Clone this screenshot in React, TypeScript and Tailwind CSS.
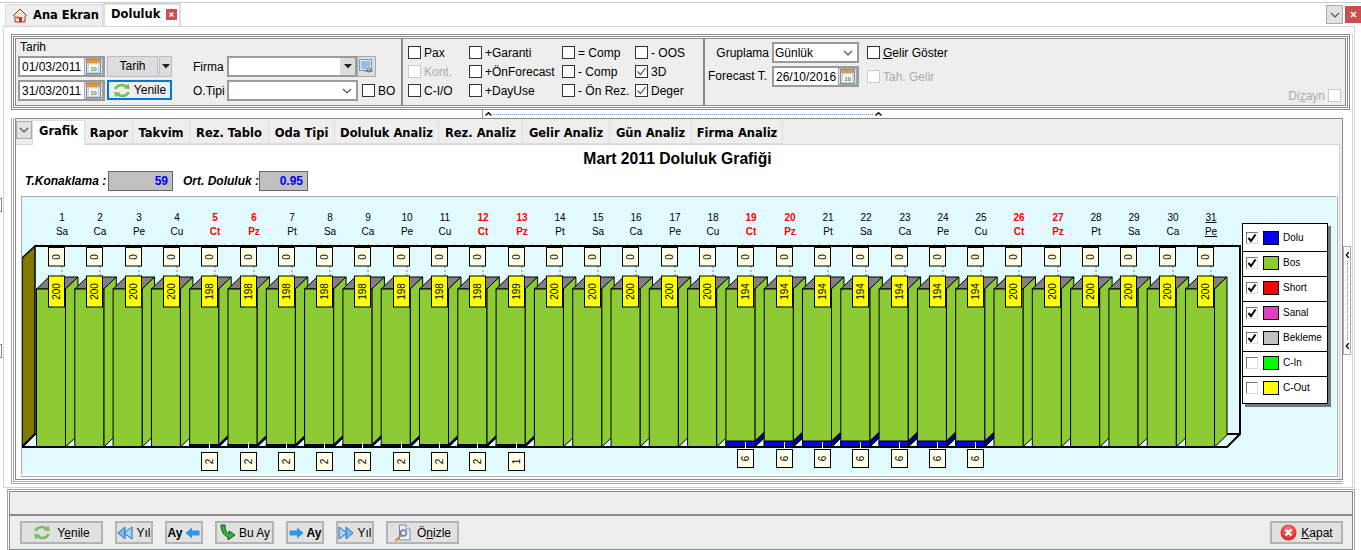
import React from "react";

const SANS = "font-['Liberation_Sans',Arial,sans-serif]";
const BOLD = "font-['DejaVu_Sans',sans-serif] font-bold text-[11.5px]";

const days = ["Sa","Ca","Pe","Cu","Ct","Pz","Pt"];
const centers = [62,100,139,177,215,254,292,330,368,407,445,483,522,560,598,636,675,713,751,790,828,866,905,943,981,1019,1058,1096,1134,1173,1211];
const data = centers.map((cx, i) => {
  const d = i + 1;
  const dolu = d >= 19 && d <= 25 ? 6 : d >= 5 && d <= 12 ? 2 : d === 13 ? 1 : 0;
  return { d, cx, name: days[i % 7], dolu, val: 200 - dolu, red: i % 7 === 4 || i % 7 === 5, left: 36.5 + 38.3 * i };
});

function Cal() {
  return (
    <svg width="15" height="15" viewBox="0 0 15 15">
      <rect x="0.5" y="0.5" width="14" height="14" fill="#cfe0ee" stroke="#7f93a8" />
      <rect x="1" y="1" width="13" height="3" fill="#e8953c" />
      <rect x="2.5" y="5" width="10" height="8" fill="#fff" stroke="#a8bccd" strokeWidth="0.5" />
      <text x="7.5" y="12" textAnchor="middle" fontSize="6" fontWeight="700" fill="#4e8a3a" fontFamily="Liberation Sans">10</text>
    </svg>
  );
}

function DateBox({ v, w = 87 }: { v: string; w?: number }) {
  return (
    <div className="flex h-[21px] items-center justify-between border-2 border-[#9a9a9a] bg-white pl-[2px]" style={{ width: w }}>
      <span className="text-[12px] leading-none text-black">{v}</span>
      <span className="flex h-[17px] w-[19px] items-center justify-center border border-[#aaa] bg-[#e1e1e1]"><Cal /></span>
    </div>
  );
}

function Check({ on, off, label, mr = 3 }: { on?: boolean; off?: boolean; label?: React.ReactNode; mr?: number }) {
  return (
    <div className="flex items-center">
      <span className={`flex h-[13px] w-[13px] items-center justify-center border bg-white ${off ? "border-[#ccc]" : "border-[#333]"}`}>
        {on && (
          <svg width="11" height="11" viewBox="0 0 11 11"><path d="M1.5 5.5 L4.5 8.5 L9.5 2" fill="none" stroke="#555" strokeWidth="1.2" /></svg>
        )}
      </span>
      {label && <span className={`text-[12px] leading-none ${off ? "text-[#aaa]" : "text-black"}`} style={{ marginLeft: mr }}>{label}</span>}
    </div>
  );
}

function Caret({ cls = "" }: { cls?: string }) {
  return <svg className={cls} width="8" height="5" viewBox="0 0 8 5"><path d="M0 0 H8 L4 4.5 Z" fill="#222" /></svg>;
}

function Chev() {
  return <svg width="10" height="6" viewBox="0 0 10 6"><path d="M1 1 L5 5 L9 1" fill="none" stroke="#555" strokeWidth="1.2" /></svg>;
}

function Hat({ cls = "" }: { cls?: string }) {
  return <svg className={cls} width="7" height="4" viewBox="0 0 7 4"><path d="M0.5 3.5 L3.5 0.7 L6.5 3.5" fill="none" stroke="#000" strokeWidth="1.3" /></svg>;
}

function Refresh() {
  return (
    <svg width="18" height="15" viewBox="0 0 18 15">
      <path d="M2.5 6 C3.5 2 10 0.5 13.5 4" fill="none" stroke="#7dbb5f" strokeWidth="2.6" />
      <path d="M10.5 5.5 L17 6 L15.5 0.5 Z" fill="#7dbb5f" />
      <path d="M15.5 9 C14.5 13 8 14.5 4.5 11" fill="none" stroke="#7dbb5f" strokeWidth="2.6" />
      <path d="M7.5 9.5 L1 9 L2.5 14.5 Z" fill="#7dbb5f" />
    </svg>
  );
}

function Btn({ w, children, cls = "" }: { w: number; children: React.ReactNode; cls?: string }) {
  return (
    <div className={`flex h-[23px] items-center justify-center gap-[3px] border-2 border-[#b4b4b4] bg-[#e1e1e1] text-[12px] text-black ${cls}`} style={{ width: w }}>
      {children}
    </div>
  );
}

function DoubleArrow({ right }: { right?: boolean }) {
  return (
    <svg width="16" height="14" viewBox="0 0 16 14" style={right ? { transform: "scaleX(-1)" } : undefined}>
      <path d="M1 7 L8 1 V13 Z" fill="#7cbcf0" stroke="#1c6fc2" />
      <path d="M7 7 L15 1 V13 Z" fill="#a8d4f6" stroke="#1c6fc2" />
    </svg>
  );
}

function Arrow({ right }: { right?: boolean }) {
  return (
    <svg width="15" height="12" viewBox="0 0 15 12" style={right ? { transform: "scaleX(-1)" } : undefined}>
      <path d="M0.5 6 L7 0.5 V3.5 H14.5 V8.5 H7 V11.5 Z" fill="#2f95e8" />
    </svg>
  );
}

function Chart() {
  const ticks: number[] = [];
  for (let x = 42; x < 1235; x += 9.6) ticks.push(x);
  return (
    <svg width="1314" height="277" viewBox="22 197 1314 277" className="block">
      {ticks.map((x, i) => (
        <line key={i} x1={x} x2={x} y1="243.5" y2="246" stroke="#bbb" strokeWidth="1" />
      ))}
      <path d="M22 258 L35 246 V434 L22 447 Z" fill="#807800" stroke="#000" strokeWidth="1.5" />
      <path d="M35 246 H1240 V434 L1227 447 H22 L35 434 H1240" fill="none" stroke="#000" strokeWidth="2" />
      {data.map((b) => {
        const l = b.left, r = l + 29, bot = 447, top = 289, dx = 12.5, dy = 12;
        const h = b.dolu === 6 ? 6 : b.dolu ? 2.5 : 0;
        return (
          <g key={b.d} stroke="#000" strokeWidth="1">
            <path d={`M${l} ${top} L${l + dx} ${top - dy} H${r + dx} L${r} ${top} Z`} fill="#808080" />
            <path d={`M${r} ${top} L${r + dx} ${top - dy} V${bot - dy} L${r} ${bot} Z`} fill="#8ccb33" />
            {h > 0 && <path d={`M${r} ${bot} V${bot - h} L${r + dx} ${bot - h - dy} V${bot - dy} Z`} fill="#000080" />}
            <rect x={l} y={top} width="29" height={bot - top} fill="#8ccb33" />
            {h > 0 && <rect x={l} y={bot - h} width="29" height={h} fill={b.dolu === 6 ? "#0000ff" : "#000070"} />}
          </g>
        );
      })}
      <line x1="22" x2="1227" y1="447" y2="447" stroke="#000" strokeWidth="2" />
      {data.map((b) => {
        const c = b.cx - 5.5;
        return (
          <g key={b.d} fontFamily="Liberation Sans" fontSize="10" fill="#000">
            <text x={b.cx} y="221" textAnchor="middle" fill={b.red ? "#ff0000" : "#000"} fontWeight={b.red ? 700 : 400} textDecoration={b.d === 31 ? "underline" : undefined}>{b.d}</text>
            <text x={b.cx} y="235" textAnchor="middle" fill={b.red ? "#ff0000" : "#000"} fontWeight={b.red ? 700 : 400} textDecoration={b.d === 31 ? "underline" : undefined}>{b.name}</text>
            <line x1={c} x2={c} y1="266" y2="276" stroke="#fff" />
            <line x1={b.cx} x2={b.cx} y1="266" y2="276" stroke="#888" strokeDasharray="2 2" />
            <rect x={c - 8} y="247.5" width="16" height="18.5" fill="#ffffe8" stroke="#000" />
            <text transform={`translate(${c + 3.5} 257) rotate(-90)`} textAnchor="middle">0</text>
            <rect x={c - 8} y="276" width="16" height="31" fill="#ffff00" stroke="#000" />
            <text transform={`translate(${c + 3.5} 291.5) rotate(-90)`} textAnchor="middle">{b.val}</text>
            {b.dolu > 0 && (() => {
              const y = b.dolu === 6 ? 449.5 : 452.5;
              return (
                <g>
                  <line x1={c} x2={c} y1="442" y2={y} stroke="#fff" />
                  <rect x={c - 8} y={y} width="16" height="18" fill="#ffffe8" stroke="#000" />
                  <text transform={`translate(${c + 3.5} ${y + 9}) rotate(-90)`} textAnchor="middle">{b.dolu}</text>
                </g>
              );
            })()}
          </g>
        );
      })}
    </svg>
  );
}

const legend: [string, string, boolean][] = [
  ["Dolu", "#0000ff", true],
  ["Bos", "#8ccb33", true],
  ["Short", "#ff0000", true],
  ["Sanal", "#e040c0", true],
  ["Bekleme", "#c0c0c0", true],
  ["C-In", "#00ff00", false],
  ["C-Out", "#ffff00", false],
];

function Legend() {
  return (
    <div className="absolute left-[1220px] top-[26px] w-[86px] border border-black bg-white shadow-[3px_3px_0_#777]">
      {legend.map(([n, c, on], i) => (
        <div key={n} className={`flex items-center pl-[3px] ${i === 0 ? "h-[28px] border-b border-black" : i === 6 ? "h-[26px] pb-[5px]" : "h-[25px] border-b border-black pb-[3px]"}`}>
          <span className="flex h-[12px] w-[12px] items-center justify-center border border-t-[#777] border-l-[#777] border-r-[#ddd] border-b-[#ddd] bg-white">
            {on && <svg width="10" height="10" viewBox="0 0 10 10"><path d="M1.5 5 L4 8 L8.5 1.5" fill="none" stroke="#000" strokeWidth="2" /></svg>}
          </span>
          <span className="ml-[5px] h-[14px] w-[16px] border border-black" style={{ background: c }} />
          <span className="ml-[4px] text-[10px] leading-none text-black">{n}</span>
        </div>
      ))}
    </div>
  );
}

export default function App() {
  const tabs = [
    ["Rapor", 47], ["Takvim", 57], ["Rez. Tablo", 79], ["Oda Tipi", 66], ["Doluluk Analiz", 104],
    ["Rez. Analiz", 84], ["Gelir Analiz", 87], ["Gün Analiz", 82], ["Firma Analiz", 91],
  ] as [string, number][];
  const cols: [string, boolean?, boolean?][][] = [
    [["Pax"], ["+Garanti"], ["= Comp"], ["- OOS"]],
    [["Kont.", false, true], ["+ÖnForecast"], ["- Comp"], ["3D", true]],
    [["C-I/O"], ["+DayUse"], ["- Ön Rez."], ["Deger", true]],
  ];
  return (
    <div className={`relative h-[550px] w-[1361px] overflow-hidden bg-white ${SANS}`}>
      {/* Top tab bar */}
      <div className="mt-[2px] flex h-[24px] items-end justify-between border-t border-[#ccc] pl-[5px]">
        <div className="flex items-end">
          <div className="flex h-[22px] w-[98px] items-center border border-b-0 border-[#ddd] bg-[#eee] pl-[7px]">
            <svg width="14" height="15" viewBox="0 0 14 15">
              <path d="M7 1 L0.5 7.5 L2 8.5 V14 H12 V8.5 L13.5 7.5 Z" fill="#f0e4d0" stroke="#8a3a30" />
              <rect x="6" y="9" width="3" height="5" fill="#c23030" />
              <rect x="3.5" y="8.5" width="2" height="2" fill="#c23030" />
            </svg>
            <span className={`ml-[6px] ${BOLD} text-black`}>Ana Ekran</span>
          </div>
          <div className="flex h-[23px] w-[78px] items-center border-2 border-b-0 border-[#ddd] bg-white pb-[2px] pl-[6px]">
            <span className={`${BOLD} text-black`}>Doluluk</span>
            <span className="ml-[6px] flex h-[11px] w-[11px] items-center justify-center bg-[#c9504f]">
              <svg width="5" height="5" viewBox="0 0 5 5"><path d="M0.5 0.5 L4.5 4.5 M4.5 0.5 L0.5 4.5" stroke="#fff" strokeWidth="1.2" /></svg>
            </span>
          </div>
        </div>
        <div className="mb-[2px] flex items-center gap-[2px]">
          <span className="flex h-[19px] w-[17px] items-center justify-center border border-[#aaa] bg-[#e1e1e1]"><Chev /></span>
          <span className="flex h-[17px] w-[16px] items-center justify-center bg-[#c9504f]">
            <svg width="7" height="7" viewBox="0 0 7 7"><path d="M1 1 L6 6 M6 1 L1 6" stroke="#fff" strokeWidth="1.6" /></svg>
          </span>
        </div>
      </div>

      {/* Main panel */}
      <div className="ml-[3px] h-[462px] w-[1352px] border border-[#d5d5d5] pl-[7px] pt-[7px]">
        <div className="h-full w-[1342px] border-r border-[#d5d5d5]">
          {/* Filter panel */}
          <div className="h-[76px] w-[1339px] border border-[#868a8e] p-px">
            <div className="h-full border border-[#868a8e] p-px">
              <div className="flex h-full border border-[#868a8e] bg-[#eee]">
                {/* left */}
                <div className="w-[385px] pl-[2px]">
                  <div className="h-[17px] pl-[2px] pt-[2px] text-[12px] leading-none text-black">Tarih</div>
                  <div className="flex h-[21px]">
                    <DateBox v="01/03/2011" />
                    <div className="ml-[2px] flex h-[21px] w-[51px] items-center justify-center border border-[#bbb] bg-[#ddd] pb-[2px] text-[12px] text-black">Tarih</div>
                    <div className="ml-px flex h-[21px] w-[13px] items-center justify-center border border-[#bbb] bg-[#ddd]"><Caret /></div>
                    <div className="ml-[21px] flex w-[34px] items-center text-[12px] text-black">Firma</div>
                    <div className="flex h-[21px] w-[130px] items-center justify-end border-2 border-[#9a9a9a] bg-white">
                      <span className="flex h-[17px] w-[15px] items-center justify-center bg-[#ddd]"><Caret /></span>
                    </div>
                    <div className="flex h-[21px] w-[19px] items-center justify-center border border-[#aaa] bg-[#ddd]">
                      <svg width="15" height="15" viewBox="0 0 15 15">
                        <rect x="0.5" y="0.5" width="12" height="11" fill="#dbeaf8" stroke="#6d9ccb" />
                        <path d="M2 3 H11 M2 5 H11 M2 7 H11 M2 9 H8" stroke="#5a8fc8" />
                        <circle cx="10" cy="11" r="2" fill="none" stroke="#666" />
                        <path d="M5 12 H14" stroke="#777" />
                      </svg>
                    </div>
                  </div>
                  <div className="mt-[3px] flex h-[21px]">
                    <DateBox v="31/03/2011" />
                    <div className="ml-[2px] flex h-[20px] w-[65px] items-center justify-center gap-[3px] border-2 border-[#0078d7] bg-[#eee] text-[12px] text-black"><Refresh />Yenile</div>
                    <div className="ml-[21px] flex w-[34px] items-center text-[12px] text-black">O.Tipi</div>
                    <div className="flex h-[21px] w-[131px] items-center justify-end border-2 border-[#9a9a9a] bg-white pr-[4px]"><Chev /></div>
                    <div className="ml-[4px] self-center"><Check label="BO" /></div>
                  </div>
                </div>
                <div className="w-[2px] bg-[#868a8e]" />
                {/* middle */}
                <div className="w-[300px] pl-[5px] pt-[4px]">
                  {cols.map((row, i) => (
                    <div key={i} className="grid h-[19px] grid-cols-[61px_93px_73px_1fr] items-center">
                      {row.map(([l, on, off]) => <Check key={l} label={l} on={on} off={off} />)}
                    </div>
                  ))}
                </div>
                <div className="w-[2px] bg-[#868a8e]" />
                {/* right */}
                <div className="flex flex-1 flex-col pr-[4px] pt-[3px]">
                  <div className="flex h-[21px] items-center">
                    <div className="w-[65px] pr-[1px] text-right text-[12px] leading-none text-black">Gruplama</div>
                    <div className="ml-[2px] flex h-[21px] w-[87px] items-center justify-between border-2 border-[#9a9a9a] bg-white pl-[1px] pr-[4px] text-[12px] text-black">Günlük<Chev /></div>
                    <div className="ml-[8px]"><Check label={<><span className="underline">G</span>elir Göster</>} /></div>
                  </div>
                  <div className="mt-[3px] flex h-[21px] items-center">
                    <div className="w-[65px] pb-[2px] pl-[3px] text-[12px] leading-none text-black">Forecast T.</div>
                    <div className="ml-[2px]"><DateBox v="26/10/2016" w={87} /></div>
                    <div className="ml-[8px]"><Check off label="Tah. Gelir" /></div>
                  </div>
                  <div className="mt-[2px] flex items-center justify-end">
                    <span className="mr-[3px] text-[12px] leading-none text-[#aaa]">Di<span className="underline">z</span>ayn</span>
                    <span className="h-[13px] w-[13px] border border-[#ccc] bg-white" />
                  </div>
                </div>
              </div>
            </div>
          </div>

          {/* Splitter */}
          <div className="ml-[471px] flex h-[8px] w-[402px] items-center justify-between border-l border-[#999] bg-white px-[2px]">
            <Hat />
            <span className="mx-[2px] flex-1 border-t border-dotted border-[#3d96e8]" />
            <Hat />
          </div>

          {/* Tab area */}
          <div className="h-[366px] w-[1332px] border-b border-l border-[#aaa] pb-px pl-px">
            <div className="h-full border-b border-l border-[#aaa] pb-px pl-px">
              <div className="flex h-full flex-col border border-[#868a8e] bg-[#eee] pr-[2px]">
                <div className="flex h-[25px] items-start">
                  <span className="mt-[2px] flex h-[18px] w-[16px] items-center justify-center border border-[#aaa] bg-[#e1e1e1]"><Chev /></span>
                  <div className="z-10 mt-px flex h-[25px] w-[53px] items-center justify-center border border-b-0 border-[#ddd] bg-white pb-[2px]">
                    <span className={`${BOLD} text-black`}>Grafik</span>
                  </div>
                  <div className="ml-px mt-px flex">
                    {tabs.map(([t, w]) => (
                      <div key={t} className={`flex h-[24px] items-center justify-center border-r border-b border-[#ddd] bg-[#eee] pt-[4px] ${BOLD} text-black`} style={{ width: w }}>{t}</div>
                    ))}
                  </div>
                </div>
                <div className="flex-1 border-t border-r border-[#d5d5d5] bg-white">
                  <div className="h-[26px] pt-[4px] text-center text-[15.7px] font-bold leading-[20px] text-black">Mart 2011 Doluluk Grafiği</div>
                  <div className="flex h-[20px] items-center pl-[9px] text-[12px] font-bold italic text-black">
                    <span className="w-[83px]">T.Konaklama :</span>
                    <span className="h-[20px] w-[65px] border border-[#666] bg-[#c0c0c0] pr-[4px] text-right not-italic leading-[18px] text-[#0000ff]">59</span>
                    <span className="ml-[10px] w-[76px]">Ort. Doluluk :</span>
                    <span className="h-[20px] w-[49px] border border-[#666] bg-[#c0c0c0] pr-[4px] text-right not-italic leading-[18px] text-[#0000ff]">0.95</span>
                  </div>
                  <div className="ml-[5px] mt-[5px] w-[1317px] border-b border-r border-[#aaa] pb-[2px] pr-px">
                    <div className="relative h-[278px] w-[1315px] border-l border-t border-[#aaa] bg-[#e0fafd]">
                      <Chart />
                      <Legend />
                    </div>
                  </div>
                </div>
              </div>
            </div>
          </div>
        </div>
      </div>

      {/* Side handle, over the main panel */}
      <div className="absolute left-[1343px] top-[246px] flex h-[109px] w-[8px] flex-col items-center justify-between border border-[#aaa] bg-white py-[6px]">
        <Hat cls="-rotate-90" />
        <span className="my-[4px] flex-1 border-l border-dotted border-[#3d96e8]" />
        <Hat cls="-rotate-90" />
      </div>
      <div className="absolute left-0 top-[198px] h-[14px] w-[2px] border-y border-r border-[#888]" />
      <div className="absolute left-0 top-[344px] h-[14px] w-[2px] border-y border-r border-[#888]" />

      {/* Bottom panel */}
      <div className="ml-[7px] mt-px h-[61px] w-[1348px] border border-b-0 border-[#a0a4a8] p-px pb-0">
        <div className="flex h-full flex-col border border-[#868a8e] bg-[#eee]">
          <div className="h-[22px]" />
          <div className="flex flex-1 items-start justify-between border-t-2 border-[#868a8e] pl-[10px] pr-[9px] pt-[5px]">
            <div className="flex gap-[12px]">
              <Btn w={83} cls="gap-[6px]"><Refresh /><span>Y<span className="underline">e</span>nile</span></Btn>
              <Btn w={38}><DoubleArrow /><span>Yıl</span></Btn>
              <Btn w={38}><b className="text-[12px]">Ay</b><Arrow /></Btn>
              <Btn w={59}>
                <svg width="17" height="17" viewBox="0 0 17 17">
                  <path d="M2 1 L6 1 C6 7 8 9 10 10 L10 7 L16 11 L9 16 L9 13 C5 12 2 7 2 1 Z" fill="#2fb52f" stroke="#14541a" />
                </svg>
                <span>Bu Ay</span>
              </Btn>
              <Btn w={38}><Arrow right /><b className="text-[12px]">Ay</b></Btn>
              <Btn w={38}><DoubleArrow right /><span>Yıl</span></Btn>
              <Btn w={73} cls="gap-[5px]">
                <svg width="18" height="18" viewBox="0 0 18 18">
                  <path d="M5.5 1 H12 L16 5 V16 H5.5 Z" fill="#eef0fa" stroke="#7e83b8" />
                  <path d="M12 1 V5 H16" fill="#fff" stroke="#7e83b8" />
                  <circle cx="9.5" cy="9" r="3" fill="#d4e8f5" stroke="#6c7b8c" strokeWidth="1.4" />
                  <path d="M7 11.5 L1.5 17" stroke="#c98a3c" strokeWidth="2" />
                </svg>
                <span>Ö<span className="underline">n</span>izle</span>
              </Btn>
            </div>
            <Btn w={73} cls="gap-[4px]">
              <svg width="17" height="17" viewBox="0 0 17 17">
                <defs>
                  <radialGradient id="kapat" cx="50%" cy="35%" r="65%"><stop offset="0%" stopColor="#f98a8a" /><stop offset="100%" stopColor="#dc1c1c" /></radialGradient>
                </defs>
                <circle cx="8.5" cy="8.5" r="8" fill="url(#kapat)" />
                <path d="M5.5 5.5 L11.5 11.5 M11.5 5.5 L5.5 11.5" stroke="#fff" strokeWidth="2.4" />
              </svg>
              <span><span className="underline">K</span>apat</span>
            </Btn>
          </div>
        </div>
      </div>
    </div>
  );
}
